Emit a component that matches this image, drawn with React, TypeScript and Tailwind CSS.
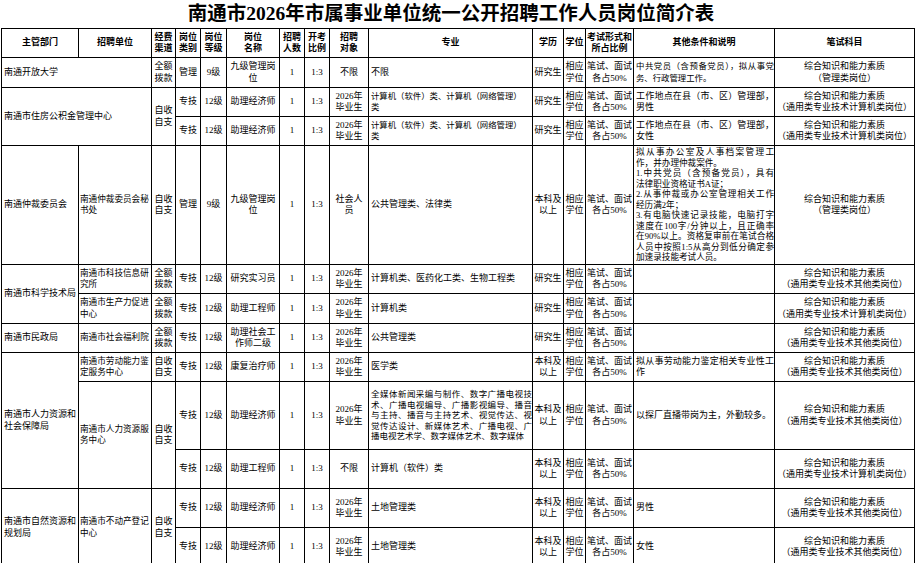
import React from 'react';

const td = 'border border-black px-0 text-center align-middle whitespace-nowrap';
const tdl = 'border border-black pl-[2px] pr-0 text-left align-middle whitespace-nowrap';
const tdu = 'border border-black pl-[1px] pr-0 text-left align-middle whitespace-nowrap text-[8.6px]';
const th = 'border border-black px-0 text-center align-middle whitespace-nowrap';

// 每行单独排版，保持原表的换行位置
function Lines({ lines, justify }: { lines: string[]; justify?: boolean }) {
  return (
    <>
      {lines.map((t, i) => (
        <div
          key={i}
          className={
            justify && i < lines.length - 1
              ? 'whitespace-normal text-justify [text-align-last:justify]'
              : ''
          }
        >
          {t}
        </div>
      ))}
    </>
  );
}

function Exam() {
  return (
    <td className={td}>
      <div>笔试、面试</div>
      <div>各占50%</div>
    </td>
  );
}

function Degree() {
  return (
    <td className={td}>
      <div>相应</div>
      <div>学位</div>
    </td>
  );
}

function Subject({ kind }: { kind: string }) {
  return (
    <td className={td}>
      <div>综合知识和能力素质</div>
      <div>（{kind}）</div>
    </td>
  );
}

function Edu({ ug }: { ug?: boolean }) {
  return (
    <td className={td}>
      {ug ? (
        <>
          <div>本科及</div>
          <div>以上</div>
        </>
      ) : (
        '研究生'
      )}
    </td>
  );
}

function Grad() {
  return (
    <td className={td}>
      <div>2026年</div>
      <div>毕业生</div>
    </td>
  );
}

function Two({ a, b }: { a: string; b?: string }) {
  return (
    <td className={td}>
      <div>{a}</div>
      {b && <div>{b}</div>}
    </td>
  );
}

function Common({ name, cond }: { name: React.ReactNode; cond?: React.ReactNode }) {
  return (
    <>
      <td className={td}>专技</td>
      <td className={td}>12级</td>
      <td className={td}>{name}</td>
      <td className={td}>1</td>
      <td className={td}>1:3</td>
      {cond ?? <Grad />}
    </>
  );
}

export default function App() {
  return (
    <div className="w-[916px] h-[563px] overflow-hidden bg-white text-black">
      <div className="h-[28px] flex items-center justify-center pr-[14px] font-['Liberation_Serif','Noto_Sans_CJK_SC',serif] font-bold text-[19.5px] leading-none">
        南通市2026年市属事业单位统一公开招聘工作人员岗位简介表
      </div>
      <div className="pl-[1px]">
        <table className="w-[913px] table-fixed border-collapse font-['Liberation_Serif','Noto_Sans_CJK_SC',serif] text-[9px] leading-[11.5px]">
          <colgroup>
            <col className="w-[77px]" />
            <col className="w-[73px]" />
            <col className="w-[24px]" />
            <col className="w-[25px]" />
            <col className="w-[26px]" />
            <col className="w-[53px]" />
            <col className="w-[25px]" />
            <col className="w-[25px]" />
            <col className="w-[39px]" />
            <col className="w-[164px]" />
            <col className="w-[31px]" />
            <col className="w-[22px]" />
            <col className="w-[48px]" />
            <col className="w-[141px]" />
            <col className="w-[140px]" />
          </colgroup>
          <tbody>
            {/* 表头 */}
            <tr className="h-[29px] font-['Liberation_Sans','Noto_Sans_CJK_SC',sans-serif] font-bold">
              <td className={th}>主管部门</td>
              <td className={th}>招聘单位</td>
              <td className={th}><Lines lines={['经费', '渠道']} /></td>
              <td className={th}><Lines lines={['岗位', '类别']} /></td>
              <td className={th}><Lines lines={['岗位', '等级']} /></td>
              <td className={th}><Lines lines={['岗位', '名称']} /></td>
              <td className={th}><Lines lines={['招聘', '人数']} /></td>
              <td className={th}><Lines lines={['开考', '比例']} /></td>
              <td className={th}><Lines lines={['招聘', '对象']} /></td>
              <td className={th}>专业</td>
              <td className={th}>学历</td>
              <td className={th}>学位</td>
              <td className={th}><Lines lines={['考试形式和', '所占比例']} /></td>
              <td className={th}>其他条件和说明</td>
              <td className={th}>笔试科目</td>
            </tr>

            {/* 南通开放大学 */}
            <tr className="h-[30px]">
              <td className={tdl} colSpan={2}>南通开放大学</td>
              <Two a="全额" b="拨款" />
              <td className={td}>管理</td>
              <td className={td}>9级</td>
              <Two a="九级管理岗" b="位" />
              <td className={td}>1</td>
              <td className={td}>1:3</td>
              <td className={td}>不限</td>
              <td className={tdl}>不限</td>
              <Edu />
              <Degree />
              <Exam />
              <td className={`${tdl} text-[8.4px]`}>
                <Lines lines={['中共党员（含预备党员），拟从事党', '务、行政管理工作。']} justify />
              </td>
              <Subject kind="管理类岗位" />
            </tr>

            {/* 住房公积金 */}
            <tr className="h-[29px]">
              <td className={tdl} colSpan={2} rowSpan={2}>南通市住房公积金管理中心</td>
              <td className={td} rowSpan={2}><Lines lines={['自收', '自支']} /></td>
              <Common name="助理经济师" />
              <td className={`${tdl} text-[8.4px]`}>
                <Lines lines={['计算机（软件）类、计算机（网络管理）', '类']} />
              </td>
              <Edu />
              <Degree />
              <Exam />
              <td className={tdl}>
                <Lines lines={['工作地点在县（市、区）管理部，', '男性']} justify />
              </td>
              <Subject kind="通用类专业技术计算机类岗位" />
            </tr>
            <tr className="h-[29px]">
              <Common name="助理经济师" />
              <td className={`${tdl} text-[8.4px]`}>
                <Lines lines={['计算机（软件）类、计算机（网络管理）', '类']} />
              </td>
              <Edu />
              <Degree />
              <Exam />
              <td className={tdl}>
                <Lines lines={['工作地点在县（市、区）管理部，', '女性']} justify />
              </td>
              <Subject kind="通用类专业技术计算机类岗位" />
            </tr>

            {/* 仲裁委 */}
            <tr className="h-[119px]">
              <td className={tdl}>南通仲裁委员会</td>
              <td className={tdu}><Lines lines={['南通仲裁委员会秘', '书处']} /></td>
              <Two a="自收" b="自支" />
              <td className={td}>管理</td>
              <td className={td}>9级</td>
              <Two a="九级管理岗" b="位" />
              <td className={td}>1</td>
              <td className={td}>1:3</td>
              <Two a="社会人" b="员" />
              <td className={tdl}>公共管理类、法律类</td>
              <Edu ug />
              <Degree />
              <Exam />
              <td className={`${tdl} text-[8.6px] leading-[10.5px]`}>
                <Lines justify lines={['拟从事办公室及人事档案管理工', '作，并办理仲裁案件。']} />
                <Lines justify lines={['1.中共党员（含预备党员），具有', '法律职业资格证书A证；']} />
                <Lines justify lines={['2.从事仲裁或办公室管理相关工作', '经历满2年；']} />
                <Lines
                  justify
                  lines={[
                    '3.有电脑快速记录技能，电脑打字',
                    '速度在100字/分钟以上，且正确率',
                    '在90%以上。资格复审前在笔试合格',
                    '人员中按照1:5从高分到低分确定参',
                    '加速录技能考试人员。',
                  ]}
                />
              </td>
              <Subject kind="管理类岗位" />
            </tr>

            {/* 科学技术局 */}
            <tr className="h-[29px]">
              <td className={tdl} rowSpan={2}>南通市科学技术局</td>
              <td className={tdu}><Lines lines={['南通市科技信息研', '究所']} /></td>
              <Two a="全额" b="拨款" />
              <Common name="研究实习员" />
              <td className={tdl}>计算机类、医药化工类、生物工程类</td>
              <Edu />
              <Degree />
              <Exam />
              <td className={tdl}></td>
              <Subject kind="通用类专业技术其他类岗位" />
            </tr>
            <tr className="h-[30px]">
              <td className={tdu}><Lines lines={['南通市生产力促进', '中心']} /></td>
              <Two a="全额" b="拨款" />
              <Common name="助理工程师" />
              <td className={tdl}>计算机类</td>
              <Edu />
              <Degree />
              <Exam />
              <td className={tdl}></td>
              <Subject kind="通用类专业技术计算机类岗位" />
            </tr>

            {/* 民政局 */}
            <tr className="h-[29px]">
              <td className={tdl}>南通市民政局</td>
              <td className={tdu}>南通市社会福利院</td>
              <Two a="全额" b="拨款" />
              <Common name={<Lines lines={['助理社会工', '作师二级']} />} />
              <td className={tdl}>公共管理类</td>
              <Edu />
              <Degree />
              <Exam />
              <td className={tdl}></td>
              <Subject kind="通用类专业技术其他类岗位" />
            </tr>

            {/* 人社局 */}
            <tr className="h-[29px]">
              <td className={tdl} rowSpan={3}><Lines lines={['南通市人力资源和', '社会保障局']} /></td>
              <td className={tdu}><Lines lines={['南通市劳动能力鉴', '定服务中心']} /></td>
              <Two a="自收" b="自支" />
              <Common name="康复治疗师" />
              <td className={tdl}>医学类</td>
              <Edu ug />
              <Degree />
              <Exam />
              <td className={tdl}>
                <Lines lines={['拟从事劳动能力鉴定相关专业性工', '作']} justify />
              </td>
              <Subject kind="通用类专业技术其他类岗位" />
            </tr>
            <tr className="h-[68px]">
              <td className={tdu} rowSpan={2}><Lines lines={['南通市人力资源服', '务中心']} /></td>
              <td className={td} rowSpan={2}><Lines lines={['自收', '自支']} /></td>
              <Common name="助理经济师" />
              <td className={`${tdl} text-[8.5px] leading-[10.5px]`}>
                <Lines
                  justify
                  lines={[
                    '全媒体新闻采编与制作、数字广播电视技',
                    '术、广播电视编导、广播影视编导、播音',
                    '与主持、播音与主持艺术、视觉传达、视',
                    '觉传达设计、新媒体艺术、广播电视、广',
                    '播电视艺术学、数字媒体艺术、数字媒体',
                  ]}
                />
              </td>
              <Edu ug />
              <Degree />
              <Exam />
              <td className={tdl}>以探厂直播带岗为主，外勤较多。</td>
              <Subject kind="通用类专业技术其他类岗位" />
            </tr>
            <tr className="h-[39px]">
              <Common name="助理工程师" cond={<td className={td}>不限</td>} />
              <td className={tdl}>计算机（软件）类</td>
              <Edu ug />
              <Degree />
              <Exam />
              <td className={tdl}></td>
              <Subject kind="通用类专业技术计算机类岗位" />
            </tr>

            {/* 自然资源和规划局 */}
            <tr className="h-[39px]">
              <td className={tdl} rowSpan={2}><Lines lines={['南通市自然资源和', '规划局']} /></td>
              <td className={tdu} rowSpan={2}><Lines lines={['南通市不动产登记', '中心']} /></td>
              <td className={td} rowSpan={2}><Lines lines={['自收', '自支']} /></td>
              <Common name="助理经济师" />
              <td className={tdl}>土地管理类</td>
              <Edu ug />
              <Degree />
              <Exam />
              <td className={tdl}>男性</td>
              <Subject kind="通用类专业技术其他类岗位" />
            </tr>
            <tr className="h-[39px]">
              <Common name="助理经济师" />
              <td className={tdl}>土地管理类</td>
              <Edu ug />
              <Degree />
              <Exam />
              <td className={tdl}>女性</td>
              <Subject kind="通用类专业技术其他类岗位" />
            </tr>
          </tbody>
        </table>
      </div>
    </div>
  );
}
